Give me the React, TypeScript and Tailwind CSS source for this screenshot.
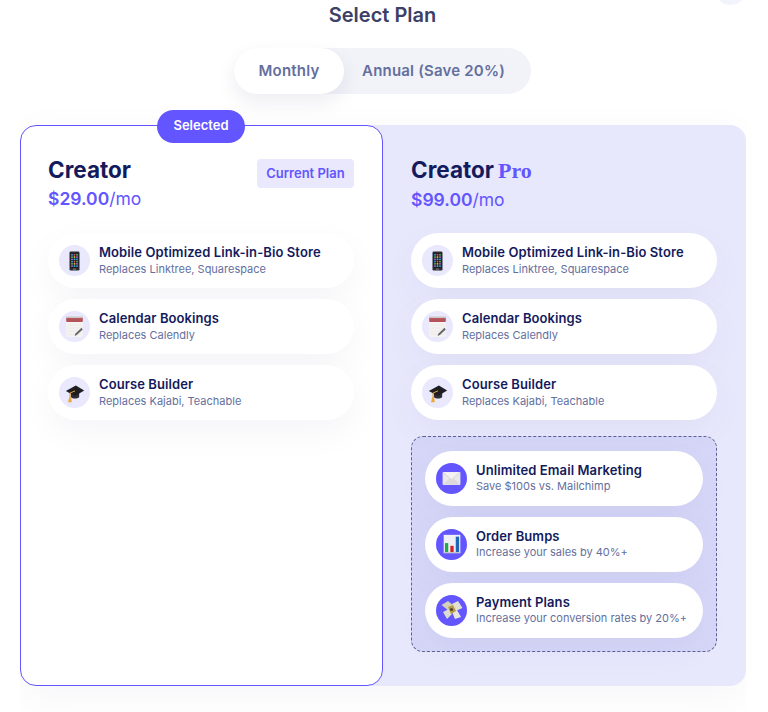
import React from 'react';

const PhoneIcon = () => (
  <svg width="15" height="20" viewBox="0 0 18 24">
    <rect x="3" y="0.5" width="12" height="23" rx="1.5" fill="#2b2b30" />
    <rect x="4.5" y="3" width="9" height="17" fill="#14141c" />
    {[0, 1, 2, 3, 4, 5].map((r) =>
      [0, 1, 2].map((c) => (
        <rect
          key={`${r}-${c}`}
          x={5 + c * 3}
          y={3.6 + r * 2.7}
          width="2"
          height="2"
          fill={['#3f9be8', '#e2574c', '#58b368', '#e8b93f', '#a56ad6', '#41c0c0'][(r * 2 + c) % 6]}
        />
      ))
    )}
    <rect x="7" y="21" width="4" height="1.4" rx="0.7" fill="#77777d" />
  </svg>
);

const CalendarIcon = () => (
  <svg width="21" height="24" viewBox="0 0 24 24" preserveAspectRatio="none">
    <rect x="2.5" y="2" width="19" height="20" rx="1.5" fill="#f4f3f1" />
    <rect x="2.5" y="2" width="19" height="5" rx="1" fill="#b4535a" />
    <rect x="2.5" y="1.5" width="19" height="1.6" fill="#c9c7c7" />
    <path d="M4 10h16M4 13h16M4 16h16M4 19h16" stroke="#e6e4e2" strokeWidth="0.6" />
    <path d="M12 21l1.2-2.6 6.8-5.6 1.4 1.6-6.8 5.7z" fill="#66666b" />
  </svg>
);

const CapIcon = () => (
  <svg width="20" height="20" viewBox="0 0 24 24">
    <path d="M7 11.5v5.5c2.5 2 7.5 2 10 0v-5.5z" fill="#2d2d33" />
    <path d="M1 9.5L13 3l10 6-11 6.5z" fill="#1d1d22" />
    <path d="M12 9.5l-6 2.5v6" fill="none" stroke="#e0a030" strokeWidth="1.2" />
    <path d="M5 17.5h2.4l.8 5.5H3.6z" fill="#e8a93a" />
  </svg>
);

const MailIcon = () => (
  <svg width="19" height="15" viewBox="0 0 20 16">
    <rect x="0.5" y="1" width="19" height="14" rx="0.8" fill="#e9e7e8" />
    <path d="M0.8 14.6L8 7.6h4l7.2 7" fill="#dddadd" />
    <path d="M0.8 1.3L10 9.4l9.2-8.1" fill="#f3f1f2" stroke="#c9c6cc" strokeWidth="0.7" />
  </svg>
);

const ChartIcon = () => (
  <svg width="20" height="22" viewBox="0 0 24 24" preserveAspectRatio="none">
    <rect x="2" y="2" width="20" height="20" fill="#eef0f6" />
    <rect x="3.5" y="11" width="4" height="10" fill="#21a84a" />
    <rect x="10" y="14" width="4" height="7" fill="#d5232b" />
    <rect x="16.5" y="4" width="4" height="17" fill="#1d66b8" />
    <rect x="2" y="21" width="20" height="1" fill="#b9bcc6" />
  </svg>
);

const MoneyIcon = () => (
  <svg width="24" height="24" viewBox="0 0 24 24">
    <path d="M1.5 7L8 3l6 5-5 5z" fill="#d3d1ba" />
    <path d="M12 6l6-3 4.5 7-7 3z" fill="#e2e0cf" />
    <path d="M3 14l6-3 3 5-5 5z" fill="#dedcca" />
    <path d="M12 14l5-2 4 7-6 2z" fill="#e8e6da" />
    <path d="M8 9l5-2 3 6-5 3z" fill="#b99a45" />
    <circle cx="11.5" cy="11.5" r="1.6" fill="#4c4530" />
  </svg>
);

const baseFeatures = [
  { title: 'Mobile Optimized Link-in-Bio Store', sub: 'Replaces Linktree, Squarespace', icon: <PhoneIcon /> },
  { title: 'Calendar Bookings', sub: 'Replaces Calendly', icon: <CalendarIcon /> },
  { title: 'Course Builder', sub: 'Replaces Kajabi, Teachable', icon: <CapIcon /> },
];

const proFeatures = [
  { title: 'Unlimited Email Marketing', sub: 'Save $100s vs. Mailchimp', icon: <MailIcon /> },
  { title: 'Order Bumps', sub: 'Increase your sales by 40%+', icon: <ChartIcon /> },
  { title: 'Payment Plans', sub: 'Increase your conversion rates by 20%+', icon: <MoneyIcon /> },
];

type Feature = { title: string; sub: string; icon: React.ReactNode };

const FeatureRow = ({ item, pro }: { item: Feature; pro?: boolean }) => (
  <div className="flex h-[55px] items-center rounded-[28px] bg-white pl-[11px] shadow-[0_12px_36px_rgba(20,20,90,0.045)]">
    <div className={`flex h-[31px] w-[31px] shrink-0 items-center justify-center rounded-full ${pro ? 'bg-[#6355ff]' : 'bg-[#e9e8fd]'}`}>
      {item.icon}
    </div>
    <div className="ml-[9px] min-w-0">
      <div className="text-[13px] leading-[17px] font-semibold tracking-[0.09px] whitespace-nowrap text-[#141b5c]">{item.title}</div>
      <div className={`text-[11px] leading-[15px] whitespace-nowrap text-[#646f9e] ${pro ? '' : 'mt-[1px]'}`}>{item.sub}</div>
    </div>
  </div>
);

const Price = ({ amount }: { amount: string }) => (
  <div className="mt-[2px] text-[17.5px] leading-[24px] text-[#6355ff]">
    <span className="font-semibold">{amount}</span>/mo
  </div>
);

export default function App() {
  return (
    <div className="relative flex h-[712px] w-[768px] flex-col overflow-hidden bg-white pr-[2px] font-['Inter',sans-serif]">
      {/* close button peeking in at the top */}
      <div className="absolute top-[-26px] right-[22px] h-[31px] w-[31px] rounded-full bg-[#f3f3fb]" />

      <h1 className="pt-[3px] pr-[1px] text-center text-[20px] leading-[24px] font-semibold text-[#3d4066]">Select Plan</h1>

      <div className="mt-[21px] flex justify-center pr-[1px]">
        <div className="flex h-[46px] w-[297px] rounded-[23px] bg-[#f2f3f8] text-[15px] font-semibold tracking-[0.2px] text-[#646f9e]">
          <div className="flex w-[110px] items-center justify-center rounded-[23px] bg-white shadow-[0_8px_20px_rgba(20,20,90,0.08)]">Monthly</div>
          <div className="flex flex-1 items-center justify-center pr-[8px]">Annual (Save 20%)</div>
        </div>
      </div>

      <div className="mx-[20px] mt-[6px] flex-1 overflow-hidden pt-[25px]">
        <div className="flex h-[561px] rounded-[16px] shadow-[0_12px_48px_rgba(20,20,90,0.04)]">
          <div className="relative z-10 w-[363px] shrink-0 rounded-[16px] border border-[#6355ff] bg-white pt-[29px] pr-[28px] pl-[27px]">
            <div className="absolute top-[-16px] left-[136px] flex h-[33px] w-[88px] items-center justify-center rounded-full bg-[#6355ff] pb-[1px] text-[13px] font-semibold text-white">
              Selected
            </div>
            <div className="flex items-start justify-between">
              <div>
                <div className="text-[22.5px] leading-[30px] font-bold text-[#141b5c]">Creator</div>
                <Price amount="$29.00" />
              </div>
              <div className="mt-[4px] flex h-[29px] w-[97px] items-center justify-center rounded-[4px] bg-[#e9e8fd] text-[13px] font-semibold text-[#6355ff]">
                Current Plan
              </div>
            </div>
            <div className="mt-[22px] flex flex-col gap-[11px]">
              {baseFeatures.map((f) => (
                <FeatureRow key={f.title} item={f} />
              ))}
            </div>
          </div>

          <div className="-ml-[20px] flex-1 rounded-r-[16px] bg-[#e8e8fd] pt-[30px] pr-[29px] pl-[48px]">
            <div className="flex items-baseline gap-[4px] text-[22.5px] leading-[30px] font-bold text-[#141b5c]">
              Creator <span className="font-['Liberation_Serif',serif] text-[22px] text-[#6355ff]">Pro</span>
            </div>
            <Price amount="$99.00" />
            <div className="mt-[21px] flex flex-col gap-[11px]">
              {baseFeatures.map((f) => (
                <FeatureRow key={f.title} item={f} />
              ))}
            </div>
            <div className="mt-[16px] flex h-[216px] flex-col justify-center gap-[11px] rounded-[12px] border border-dashed border-[#5d6296] bg-[#d6d7f8] px-[13px]">
              {proFeatures.map((f) => (
                <FeatureRow key={f.title} item={f} pro />
              ))}
            </div>
          </div>
        </div>
      </div>
    </div>
  );
}
